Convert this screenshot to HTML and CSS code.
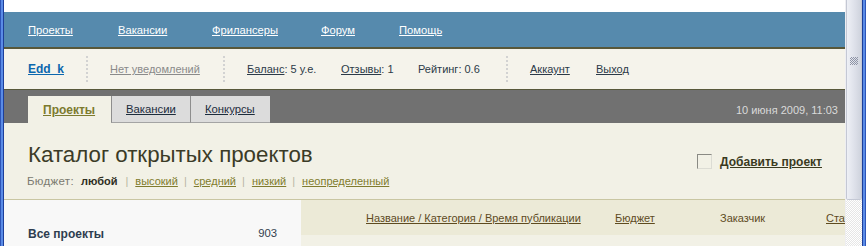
FILE: index.html
```html
<!DOCTYPE html>
<html lang="ru">
<head>
<meta charset="utf-8">
<title>Каталог открытых проектов</title>
<link rel="stylesheet" href="styles.css">
</head>
<body>
<div class="window">
  <div class="frame-left"></div>
  <div class="page">
    <div class="topspace"></div>
    <nav class="mainnav">
      <a class="n1" href="#">Проекты</a>
      <a class="n2" href="#">Вакансии</a>
      <a class="n3" href="#">Фрилансеры</a>
      <a class="n4" href="#">Форум</a>
      <a class="n5" href="#">Помощь</a>
    </nav>
    <div class="userbar">
      <span class="ub ub-user"><a class="username" href="#">Edd_k</a></span>
      <span class="sep"></span>
      <span class="ub ub-notice"><a class="notice" href="#">Нет уведомлений</a></span>
      <span class="sep"></span>
      <span class="ub ub-bal"><a href="#">Баланс</a>: 5 у.е.</span>
      <span class="ub ub-rev"><a href="#">Отзывы</a>: 1</span>
      <span class="ub ub-rate">Рейтинг: 0.6</span>
      <span class="sep"></span>
      <span class="ub ub-acc"><a href="#">Аккаунт</a></span>
      <span class="ub"><a href="#">Выход</a></span>
    </div>
    <div class="tabbar">
      <div class="tabs">
        <a class="tab active" href="#">Проекты</a>
        <a class="tab" href="#">Вакансии</a>
        <a class="tab" href="#">Конкурсы</a>
      </div>
      <div class="date">10 июня 2009, 11:03</div>
    </div>
    <div class="head">
      <div class="head-main">
        <h1 class="title">Каталог открытых проектов</h1>
        <div class="budget">
          <span class="blabel">Бюджет:</span>
          <b class="bcur">любой</b>
          <span class="bsep">|</span>
          <a href="#">высокий</a>
          <span class="bsep">|</span>
          <a href="#">средний</a>
          <span class="bsep">|</span>
          <a href="#">низкий</a>
          <span class="bsep">|</span>
          <a href="#">неопределенный</a>
        </div>
      </div>
      <div class="add">
        <span class="addbox"></span>
        <a href="#">Добавить проект</a>
      </div>
    </div>
    <div class="listing">
      <aside class="side">
        <div class="side-row"><b>Все проекты</b><span>903</span></div>
      </aside>
      <div class="table">
        <div class="thead">
          <a class="c1" href="#">Название / Категория / Время публикации</a>
          <a class="c2" href="#">Бюджет</a>
          <span class="c3">Заказчик</span>
          <a class="c4" href="#">Статус</a>
        </div>
      </div>
    </div>
  </div>
  <div class="scrollbar">
    <div class="thumb"><span class="grip"></span></div>
    <div class="track"></div>
  </div>
  <div class="frame-right"></div>
</div>
</body>
</html>
```
FILE: styles.css
```css
html, body {
  margin: 0;
  padding: 0;
  background: #ffffff;
}
body {
  font-family: "Liberation Sans", Arial, sans-serif;
  font-size: 11px;
  overflow: hidden;
}
a { color: inherit; }

.window {
  display: flex;
  width: 866px;
  height: 246px;
  overflow: hidden;
}
.frame-left {
  width: 4px;
  flex: none;
  background: linear-gradient(to right, #2e55b8 0, #2e55b8 1px, #5a8be6 1px, #5a8be6 3px, #1d3f9a 3px);
}
.frame-right {
  width: 4px;
  flex: none;
  background: linear-gradient(to right, #1d3f9a 0, #1d3f9a 1px, #5a8be6 1px, #5a8be6 3px, #2e55b8 3px);
}
.page {
  width: 841px;
  flex: none;
  display: flex;
  flex-direction: column;
  overflow: hidden;
}
.topspace { height: 12px; background: #fff; }

.mainnav {
  height: 35px;
  background: #568aad;
  border-bottom: 2px solid #58583a;
  display: flex;
  align-items: center;
  padding-left: 24px;
  font-size: 11.2px;
}
.mainnav a { color: #ffffff; flex: none; }
.mainnav .n1 { width: 90px; }
.mainnav .n2 { width: 94px; }
.mainnav .n3 { width: 109px; }
.mainnav .n4 { width: 78px; }

.userbar {
  height: 40px;
  background: #f5f3eb;
  border-bottom: 1px solid #58583a;
  display: flex;
  align-items: center;
  padding-left: 24px;
  color: #2c3a48;
  font-size: 11px;
}
.ub { flex: none; }
.ub a { color: #2c3a48; }
.ub-user { width: 58px; }
.ub-notice { width: 113px; }
.ub-bal { width: 94px; }
.ub-rev { width: 77px; }
.ub-rate { width: 88px; }
.ub-acc { width: 66px; }
.ub .username { color: #0b67ae; font-weight: bold; font-size: 12px; }
.ub .notice { color: #8a8a8a; }
.sep {
  flex: none;
  width: 22px;
  height: 26px;
  border-left: 2px dotted #d2d2d2;
}

.tabbar {
  height: 33px;
  background: #717171;
  display: flex;
  align-items: flex-end;
  justify-content: space-between;
  padding-left: 24px;
  padding-right: 7px;
}
.tabs { display: flex; height: 27px; }
.tab {
  display: flex;
  align-items: center;
  padding: 0 14px;
  background: #dcdcdc;
  color: #1c2c3c;
  border-left: 1px solid #8e8e8e;
  border-bottom: 1px solid #a4a4a4;
  box-sizing: border-box;
  font-size: 11.3px;
}
.tab.active {
  background: #f2f1e6;
  color: #7c7a2e;
  font-weight: bold;
  font-size: 12px;
  border: none;
  padding: 0 15px;
  width: 83px;
}
.tab:nth-child(2) { width: 79px; }
.tab:nth-child(3) { width: 80px; }
.date {
  height: 27px;
  display: flex;
  align-items: center;
  color: #dadada;
}

.head {
  height: 76px;
  background: #f2f1e6;
  border-bottom: 1px solid #c9c6a2;
  display: flex;
  justify-content: space-between;
  padding-left: 24px;
  padding-right: 23px;
}
.title {
  margin: 20px 0 0;
  font-weight: normal;
  font-size: 22.3px;
  line-height: 24px;
  color: #3b3b27;
}
.budget {
  margin-top: 8px;
  display: flex;
  align-items: baseline;
  gap: 6px;
  font-size: 11px;
  color: #7a7a70;
}
.blabel { font-size: 11.5px; letter-spacing: 0.3px; margin-left: -1px; margin-right: 1px; }
.bcur { color: #2e2e22; font-size: 11px; margin-right: 2px; }
.budget a { color: #807c2e; }
.bsep { color: #b8b6a2; margin-right: 1px; }
.add {
  margin-top: 31px;
  display: flex;
  align-items: flex-start;
  gap: 8px;
}
.addbox {
  width: 15px;
  height: 15px;
  box-sizing: border-box;
  border-top: 1px solid #8a8a84;
  border-left: 1px solid #8a8a84;
  border-right: 1px solid #dcdcd4;
  border-bottom: 1px solid #dcdcd4;
}
.add a {
  font-weight: bold;
  font-size: 12px;
  color: #3a3a1e;
  margin-top: 1px;
}

.listing {
  flex: 1;
  display: flex;
}
.side {
  width: 297px;
  background: #f8f8f8;
}
.side-row {
  display: flex;
  justify-content: space-between;
  padding: 27px 24px 0 24px;
  color: #2e3d4f;
  font-size: 12px;
}
.side-row span { color: #33414f; font-size: 11.3px; }
.table {
  flex: 1;
  background: #f2f1e6;
  overflow: hidden;
}
.thead {
  height: 35px;
  background: #ecead7;
  display: flex;
  align-items: center;
  padding-left: 65px;
  color: #5e4b1f;
  white-space: nowrap;
}
.thead .c1 { width: 249px; flex: none; }
.thead .c2 { width: 105px; flex: none; }
.thead .c3 { width: 106px; flex: none; }

.scrollbar {
  width: 17px;
  flex: none;
  display: flex;
  flex-direction: column;
  border-left: 1px solid #eeeef2;
  box-sizing: border-box;
}
.thumb {
  height: 200px;
  background: linear-gradient(to right, #eef0f6, #dcdfe8 60%, #cfd3dd);
  border: 1px solid #c4c8d4;
  border-top: none;
  border-radius: 0 0 2px 2px;
  box-sizing: border-box;
  position: relative;
}
.grip {
  position: absolute;
  left: 3px;
  top: 57px;
  width: 8px;
  height: 8px;
  background-image: repeating-conic-gradient(#8e94a6 0 25%, transparent 0 50%);
  background-size: 2px 2px;
}
.track {
  flex: 1;
  background-color: #ffffff;
  background-image: repeating-conic-gradient(#e6e6e6 0 25%, #ffffff 0 50%);
  background-size: 2px 2px;
}
```
